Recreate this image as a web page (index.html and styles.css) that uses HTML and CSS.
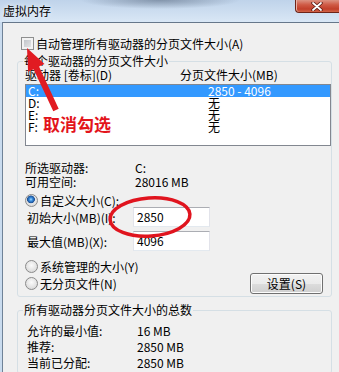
FILE: index.html
```html
<!DOCTYPE html>
<html>

<head>
  <meta charset="UTF-8">
  <title>虚拟内存</title>
  <link rel="stylesheet" href="styles.css">
</head>

<body>
  <div class="window">
    <div class="titlebar">
      <span class="title">虚拟内存</span>
      <div class="close">
        <svg width="12" height="9" viewBox="0 0 12 9">
          <path d="M2 1 L10 8 M10 1 L2 8" stroke="#5a1a12" stroke-width="3.4" stroke-linecap="round" />
          <path d="M2 1 L10 8 M10 1 L2 8" stroke="#ffffff" stroke-width="1.8" stroke-linecap="round" />
        </svg>
      </div>
    </div>

    <div class="frame">
      <div class="content">
        <div class="check-row">
          <span class="checkbox"></span>
          <span>自动管理所有驱动器的分页文件大小(A)</span>
        </div>

        <!-- per drive group -->
        <fieldset class="group drives">
          <legend>每个驱动器的分页文件大小</legend>
          <div class="list-head">
            <span>驱动器 [卷标](D)</span>
            <span>分页文件大小(MB)</span>
          </div>
          <div class="listbox">
            <div class="list-row selected"><span>C:</span><span>2850 - 4096</span></div>
            <div class="list-row"><span>D:</span><span>无</span></div>
            <div class="list-row"><span>E:</span><span>无</span></div>
            <div class="list-row"><span>F:</span><span>无</span></div>
          </div>

          <div class="info">
            <span>所选驱动器:</span><span>C:</span>
            <span>可用空间:</span><span>28016 MB</span>
          </div>

          <div class="radio-row first">
            <span class="radio checked"></span>
            <span>自定义大小(C):</span>
          </div>
          <div class="field-row">
            <span class="field-label">初始大小(MB)(I):</span>
            <span class="textbox">2850</span>
          </div>
          <div class="field-row second">
            <span class="field-label">最大值(MB)(X):</span>
            <span class="textbox">4096</span>
          </div>
          <div class="radio-row system">
            <span class="radio"></span>
            <span>系统管理的大小(Y)</span>
          </div>
          <div class="button-row">
            <div class="radio-row">
              <span class="radio"></span>
              <span>无分页文件(N)</span>
            </div>
            <button class="btn">设置(S)</button>
          </div>
        </fieldset>

        <!-- totals group -->
        <fieldset class="group totals">
          <legend>所有驱动器分页文件大小的总数</legend>
          <div class="totals-grid">
            <span>允许的最小值:</span><span>16 MB</span>
            <span>推荐:</span><span>2850 MB</span>
            <span>当前已分配:</span><span>2850 MB</span>
          </div>
        </fieldset>
      </div>
    </div>
  </div>

  <!-- red annotation drawn over the dialog -->
  <svg class="marks" width="339" height="372" viewBox="0 0 339 372">
    <polygon points="27,48 44.5,64.1 39,66.6 58.7,108.7 53.3,111.3 33.6,69.2 28.1,71.7" fill="#e11b22" />
    <ellipse cx="150" cy="217" rx="40" ry="19" fill="none" stroke="#e0141e" stroke-width="3.5" transform="rotate(-4 150 217)" />
  </svg>
  <div class="note">取消勾选</div>
</body>

</html>
```

FILE: styles.css
```css
body {
  margin: 0;
  width: 339px;
  height: 372px;
  overflow: hidden;
  position: relative;
  font-family: "Noto Sans CJK SC", sans-serif;
  font-size: 12px;
  color: #000;
  background: #f0f0f0;
}

.window {
  height: 372px;
  display: flex;
  flex-direction: column;
  background: #c9dbee;
}

/* title bar */
.titlebar {
  height: 22px;
  flex-shrink: 0;
  display: flex;
  justify-content: space-between;
  align-items: flex-start;
  background:
    radial-gradient(ellipse 80px 9px at 160px 0, rgba(70, 86, 108, 0.5), transparent),
    linear-gradient(#bfd3ea, #d9e7f5);
}

.title {
  padding-left: 3px;
  line-height: 21px;
  text-shadow: 0 0 5px #ffffff;
}

.close {
  width: 44px;
  height: 13px;
  box-sizing: border-box;
  display: flex;
  justify-content: center;
  align-items: center;
  padding-right: 2px;
  border: 1px solid #6e2418;
  border-top: none;
  border-right: none;
  border-radius: 0 0 0 4px;
  background: linear-gradient(#dc9282 0%, #cf5a45 40%, #c23f2a 75%, #d06448 100%);
  box-shadow: inset 1px 0 0 #e9b3a6;
}

.frame {
  flex: 1;
  padding-left: 2px;
}

.content {
  height: 100%;
  background: #f0f0f0;
  border-left: 1px solid #6f8297;
  border-top: 1px solid #66778a;
}

/* auto manage checkbox */
.check-row {
  display: flex;
  align-items: center;
  gap: 2px;
  height: 13px;
  line-height: 13px;
  margin: 14px 0 0 18px;
}

.checkbox {
  width: 13px;
  height: 13px;
  box-sizing: border-box;
  border: 1px solid #8e8f8f;
  background: linear-gradient(135deg, #b9bdc3, #ececec);
  box-shadow: inset 0 0 0 2px #f3f3f3;
}

/* group boxes */
.group {
  margin: 5px 7px 0 14px;
  padding: 0 0 2px 7px;
  border: 1px solid #d5dfe5;
  border-radius: 3px;
  min-width: 0;
}

.group legend {
  padding: 0 1px;
  margin-left: -2px;
  line-height: 12px;
}

.totals {
  margin-top: 7px;
  padding-left: 9px;
}

.totals legend {
  margin-left: -4px;
}

.list-head {
  display: grid;
  grid-template-columns: 155px auto;
  justify-items: start;
  line-height: 12px;
  margin-top: 2px;
}

.listbox {
  height: 62px;
  box-sizing: border-box;
  margin-top: 3px;
  border: 1px solid #828790;
  background: #ffffff;
}

.list-row {
  display: grid;
  grid-template-columns: 180px auto;
  justify-items: start;
  padding-left: 2px;
  line-height: 12px;
}

.list-row.selected {
  background: #3399ff;
  color: #ffffff;
}

.info {
  display: grid;
  grid-template-columns: 110px auto;
  justify-items: start;
  line-height: 14px;
  margin-top: 15px;
}

/* radios */
.radio-row {
  display: flex;
  align-items: center;
  gap: 2px;
  height: 13px;
  line-height: 13px;
}

.radio-row.first {
  margin-top: 5px;
}

.radio-row.system {
  margin-top: 9px;
}

.radio {
  width: 13px;
  height: 13px;
  box-sizing: border-box;
  border-radius: 50%;
  border: 1px solid #8a8a8a;
  background: radial-gradient(circle at 50% 40%, #fbfbfb 0, #e6e6e6 50%, #cfcfcf 100%);
}

.radio.checked {
  background:
    radial-gradient(circle at 45% 40%, #a8dcff 0, #3a8ee0 1.6px, #1c4f94 3.6px, transparent 4.2px),
    radial-gradient(circle at 50% 40%, #fbfbfb 0, #e6e6e6 50%, #cfcfcf 100%);
}

/* size inputs */
.field-row {
  display: grid;
  grid-template-columns: 108px 77px;
  align-items: center;
  height: 20px;
}

.field-row.second {
  margin-top: 4px;
}

.field-label {
  padding-left: 2px;
}

.textbox {
  height: 20px;
  box-sizing: border-box;
  padding-left: 3px;
  line-height: 18px;
  border: 1px solid;
  border-color: #abadb3 #e2e3ea #e3e9ef #e2e3ea;
  background: #ffffff;
}

.button-row {
  display: flex;
  align-items: center;
  height: 21px;
}

.btn {
  width: 73px;
  height: 21px;
  margin: 0 8px 0 auto;
  padding: 0;
  font: inherit;
  color: #000;
  border: 1px solid #707070;
  border-radius: 3px;
  background: linear-gradient(#f2f2f2 0%, #ebebeb 50%, #dddddd 51%, #cfcfcf 100%);
  box-shadow: inset 0 0 0 1px #fcfcfc;
}

.totals-grid {
  display: grid;
  grid-template-columns: 110px auto;
  justify-items: start;
  line-height: 16px;
  margin-top: 7px;
}

/* annotation */
.marks {
  position: absolute;
  top: 0;
  left: 0;
  pointer-events: none;
}

.note {
  position: absolute;
  left: 43px;
  top: 115px;
  font-size: 17px;
  line-height: 17px;
  font-weight: bold;
  color: #e3141b;
}
```
